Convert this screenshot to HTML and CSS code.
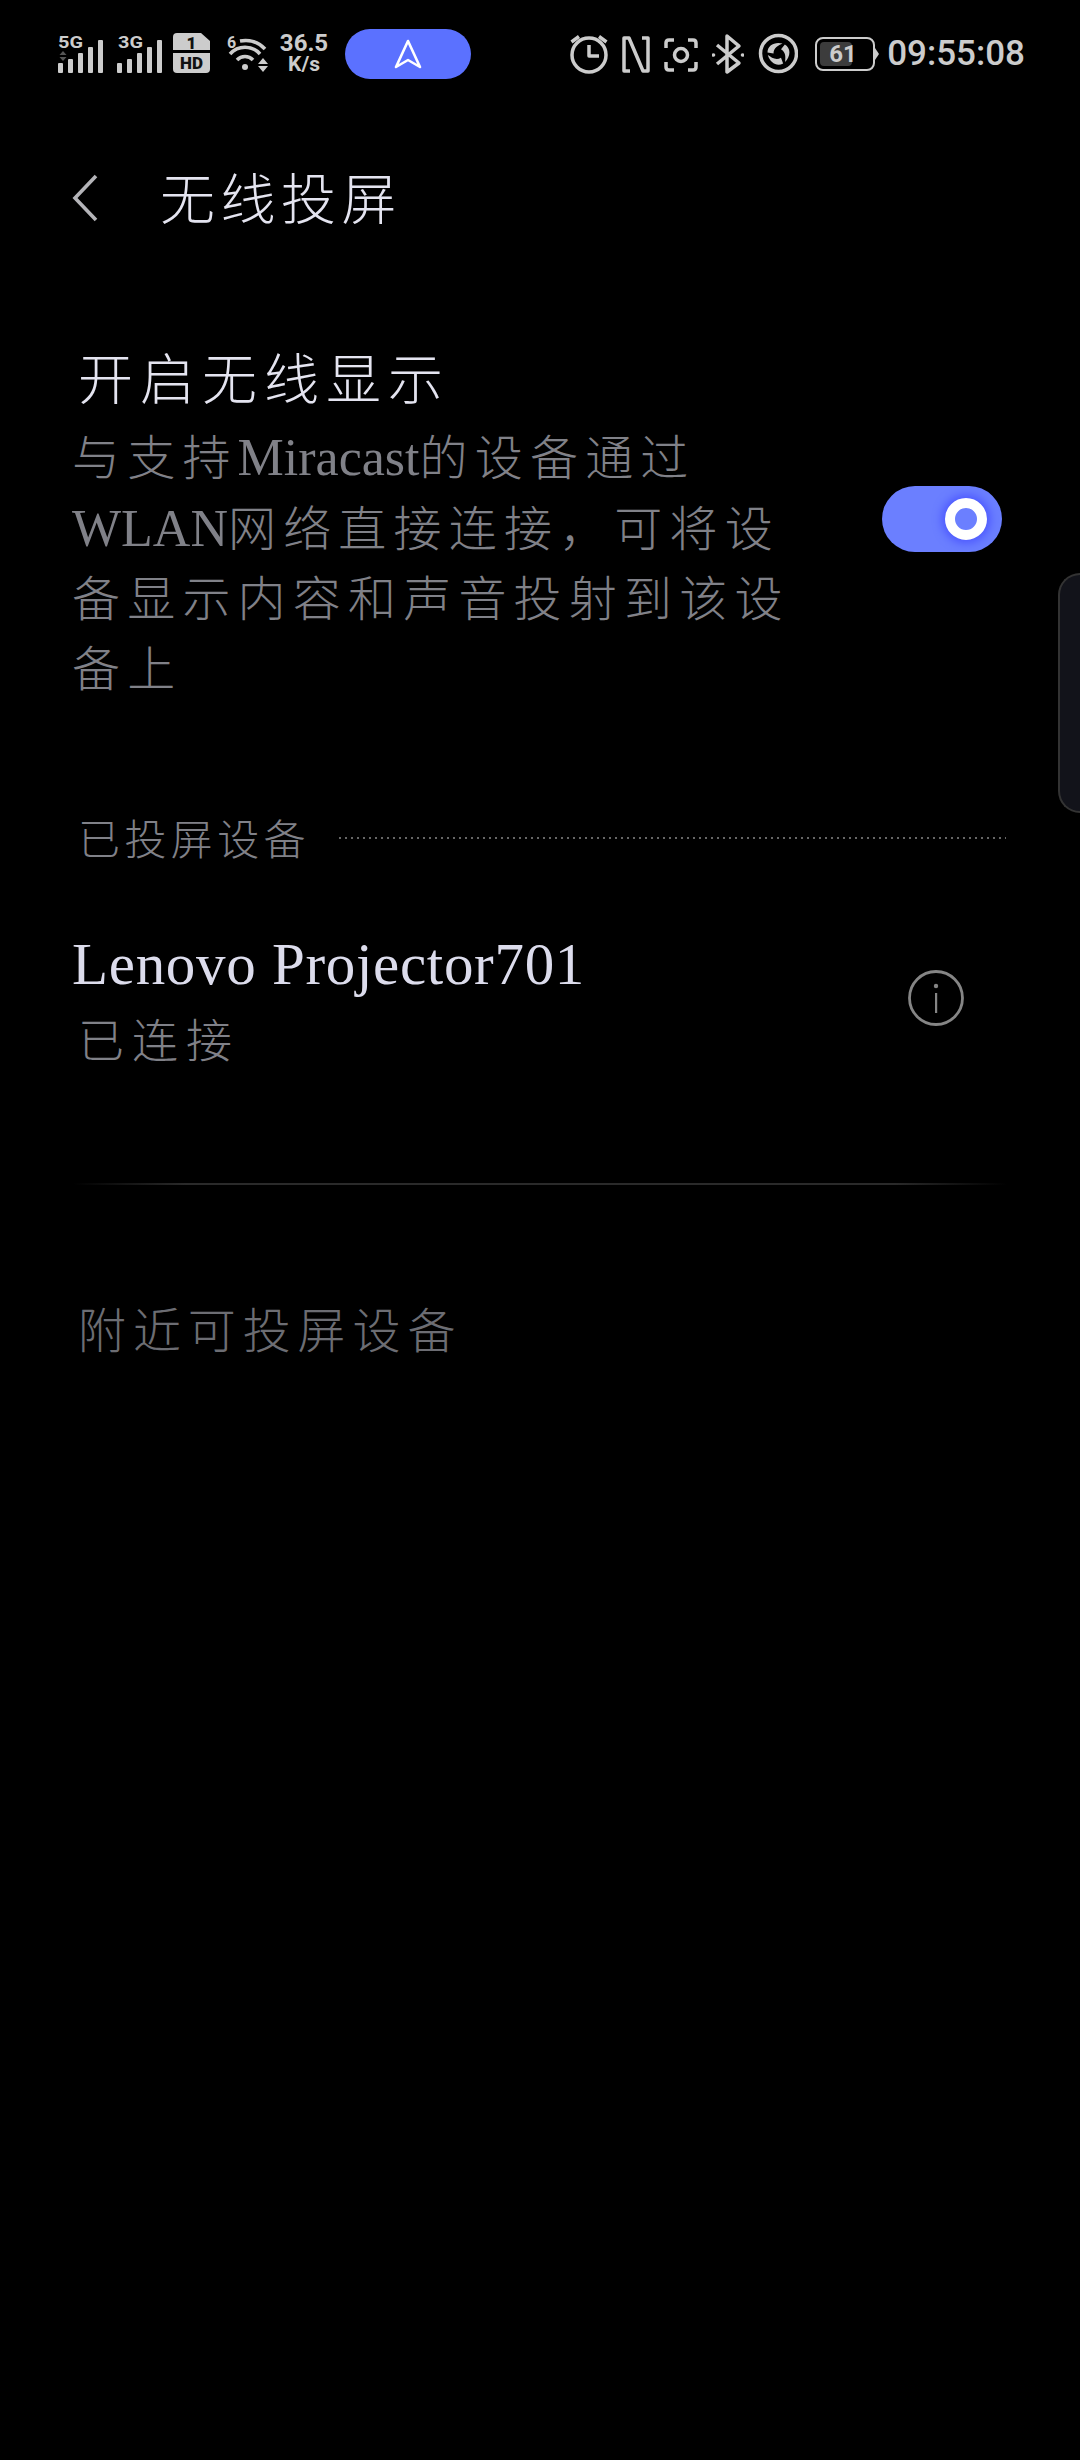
FILE: index.html
```html
<!DOCTYPE html>
<html lang="zh-CN">
<head>
    <meta charset="UTF-8">
    <title>无线投屏</title>
    <link rel="stylesheet" href="styles.css">
</head>
<body>
<div class="status">
    <div class="status-left">
        <svg class="ic" width="46" height="50" viewBox="0 0 46 50">
            <text x="0" y="19" class="ic-label" textLength="25" lengthAdjust="spacingAndGlyphs">5G</text>
            <path class="dim" d="M4 22l3.500 4h-7zM4 32l3.500-4h-7z" transform="translate(1 0)"/>
            <rect class="bar" x="0" y="34" width="5" height="10" rx="1"/>
            <rect class="bar" x="10" y="30" width="5" height="14" rx="1"/>
            <rect class="bar" x="20" y="24" width="5" height="20" rx="1"/>
            <rect class="bar" x="30" y="18" width="5" height="26" rx="1"/>
            <rect class="bar" x="40" y="11" width="5" height="33" rx="1"/>
        </svg>
        <svg class="ic gap-13" width="46" height="50" viewBox="0 0 46 50">
            <text x="1" y="19" class="ic-label" textLength="25" lengthAdjust="spacingAndGlyphs">3G</text>
            <rect class="bar" x="0" y="34" width="5" height="10" rx="1"/>
            <rect class="bar" x="10" y="30" width="5" height="14" rx="1"/>
            <rect class="bar" x="20" y="24" width="5" height="20" rx="1"/>
            <rect class="bar" x="30" y="18" width="5" height="26" rx="1"/>
            <rect class="bar" x="40" y="11" width="5" height="33" rx="1"/>
        </svg>
        <svg class="ic gap-10" width="37" height="50" viewBox="0 0 37 50">
            <path class="bar" d="M4 4H28L37 12V21H0V8Q0 4 4 4Z"/>
            <path class="bar" d="M0 24H37V40Q37 44 33 44H4Q0 44 0 40Z"/>
            <text x="18.500" y="19.500" class="sim-text">1</text>
            <text x="18.500" y="40" class="sim-text">HD</text>
        </svg>
        <svg class="ic gap-17" width="42" height="50" viewBox="0 0 42 50">
            <text x="0" y="19" class="ic-label">6</text>
            <path class="line" d="M13 12A27 27 0 0 1 38 20M3 25A20 20 0 0 1 33 25M10 31A11 11 0 0 1 26 31"/>
            <circle class="bar" cx="18" cy="38" r="3"/>
            <path class="bar" d="M36 29l5 6h-10zM36 43l5-6h-10z"/>
        </svg>
        <div class="speed gap-11"><span>36.5</span><span class="speed-unit">K/s</span></div>
        <div class="nav-pill gap-17">
            <svg width="30" height="32" viewBox="0 0 30 32"><path d="M15 3L27 29L15 22L3 29Z" fill="none" stroke="#fff" stroke-width="2.600" stroke-linejoin="round"/></svg>
        </div>
    </div>
    <div class="status-right">
        <svg class="ic" width="38" height="50" viewBox="0 0 38 50">
            <circle class="line" cx="19" cy="26" r="17"/>
            <path class="line" d="M19 16V27H29M1.500 13L9 7.500M36.500 13L29 7.500"/>
        </svg>
        <svg class="ic" width="28" height="50" viewBox="0 0 28 50">
            <path class="line" d="M8 42H2V9H7L21 42H26V9H20"/>
        </svg>
        <svg class="ic" width="34" height="50" viewBox="0 0 34 50">
            <path class="line" d="M10 11H5Q2 11 2 14V19M24 11H29Q32 11 32 14V19M10 41H5Q2 41 2 38V33M24 41H29Q32 41 32 38V33"/>
            <circle class="line" cx="17" cy="26" r="6.500"/>
        </svg>
        <svg class="ic" width="32" height="50" viewBox="0 0 32 50">
            <path class="line" d="M5 16L27 34L15 43V7L27 17L5 35"/>
            <circle class="bar" cx="1.500" cy="26" r="1.800"/>
            <circle class="bar" cx="30.500" cy="26" r="1.800"/>
        </svg>
        <svg class="ic" width="40" height="50" viewBox="0 0 40 50">
            <circle class="line" cx="20.500" cy="24.500" r="18"/>
            <g class="bar" transform="translate(20.500 24.500)">
                <path id="blade" d="M-11-1C-11-8-4-12 4-10C0-8-5-6-5 0Z"/>
                <use href="#blade" transform="rotate(120)"/>
                <use href="#blade" transform="rotate(240)"/>
            </g>
        </svg>
        <div class="battery">
            <div class="battery-body"><div class="battery-fill">61</div></div>
            <div class="battery-tip"></div>
        </div>
        <div class="clock">09:55:08</div>
    </div>
</div>

<div class="header">
    <svg class="back" width="26" height="48" viewBox="0 0 26 48"><path d="M24 2L3 24L24 46" fill="none" stroke="#b4b4b8" stroke-width="3.600"/></svg>
    <div class="header-title">无线投屏</div>
</div>

<div class="switch-row">
    <div class="switch-text">
        <div class="switch-title">开启无线显示</div>
        <div class="switch-desc">与支持<span class="latin">Miracast</span>的设备通过<br><span class="latin">WLAN</span>网络直接连接，可将设<br>备显示内容和声音投射到该设<br>备上</div>
    </div>
    <div class="toggle"><div class="knob"></div></div>
</div>

<div class="section-head">
    <div class="section-title">已投屏设备</div>
    <div class="dots"></div>
</div>

<div class="device">
    <div class="device-text">
        <div class="device-name">Lenovo Projector701</div>
        <div class="device-state">已连接</div>
    </div>
    <svg class="info" width="56" height="56" viewBox="0 0 56 56">
        <circle cx="28" cy="28" r="26.500" fill="none" stroke="#858585" stroke-width="2.800"/>
        <circle cx="28" cy="16" r="2.200" fill="#858585"/>
        <rect x="27" y="23" width="2.200" height="20" fill="#858585"/>
    </svg>
</div>

<div class="divider"></div>

<div class="nearby">附近可投屏设备</div>

<div class="side-tab"></div>
</body>
</html>
```

FILE: styles.css
```css
body { margin: 0; height: 2460px; overflow: hidden; position: relative; background-color: #000; font-family: "Liberation Serif", "Noto Sans CJK SC", serif; font-weight: 300; }

/* status bar */
.status { height: 108px; padding: 0 55px 0 58px; display: flex; justify-content: space-between; align-items: center; color: #ccc; font-family: Roboto, sans-serif; }
.status-left, .status-right { display: flex; align-items: center; }
.status-right { gap: 14px; }
.ic { display: block; flex: none; }
.ic-label { font: bold 16px Roboto, sans-serif; fill: #ccc; }
.bar { fill: #ccc; }
.dim { fill: #555; }
.line { fill: none; stroke: #ccc; stroke-width: 3.5; stroke-linejoin: round; }
.sim-text { font: 900 17px Roboto, sans-serif; fill: #111; text-anchor: middle; }
.gap-10 { margin-left: 10px; }
.gap-11 { margin-left: 11px; }
.gap-13 { margin-left: 13px; }
.gap-17 { margin-left: 17px; }
.speed { width: 48px; display: flex; flex-direction: column; align-items: center; font-size: 24px; font-weight: 700; line-height: 21px; }
.speed-unit { font-size: 21px; }
.nav-pill { width: 126px; height: 50px; border-radius: 25px; background-color: #5b71ff; display: flex; align-items: center; justify-content: center; }
.battery { width: 64px; height: 34px; margin-left: 3px; display: flex; align-items: center; }
.battery-body { width: 60px; height: 34px; box-sizing: border-box; padding: 3px; border: 2.5px solid #ccc; border-radius: 8px; }
.battery-fill { width: 32px; height: 100%; box-sizing: border-box; padding-left: 9px; border-radius: 4px; background-color: #3c3c3c; font-size: 24px; font-weight: 700; line-height: 24px; white-space: nowrap; }
.battery-tip { width: 0; height: 0; border-left: 4px solid #ccc; border-top: 6px solid transparent; border-bottom: 6px solid transparent; }
.clock { margin-left: -6px; font-size: 35px; font-weight: 500; line-height: 50px; }

/* title */
.header { height: 180px; padding-left: 72px; display: flex; align-items: center; }
.back { display: block; }
.header-title { margin: 0 0 6px 62px; font-size: 55px; letter-spacing: 5.5px; color: #e4e4f0; }

/* main switch */
.switch-row { margin-top: 52px; padding: 0 78px 0 72px; display: flex; align-items: center; justify-content: space-between; }
.switch-title { padding-left: 6px; font-size: 55px; line-height: 82px; letter-spacing: 7px; color: #e4e4f0; }
.switch-desc { margin-top: 1px; white-space: nowrap; font-size: 48px; line-height: 70px; letter-spacing: 7.2px; color: #808188; }
.switch-desc .latin { font-size: 52px; letter-spacing: 0; }
.toggle { width: 120px; height: 66px; margin-bottom: 7px; padding-right: 15px; box-sizing: border-box; border-radius: 33px; background-color: #6b7fff; display: flex; align-items: center; justify-content: flex-end; }
.knob { width: 42px; height: 42px; box-sizing: border-box; border: 10px solid #fff; border-radius: 50%; background-color: #6b7fff; box-shadow: 0 0 10px 3px #4a55ff; }

/* connected list */
.section-head { margin-top: 101px; padding: 0 74px 0 78px; height: 60px; display: flex; align-items: center; }
.section-title { font-size: 42px; letter-spacing: 4.4px; color: #808188; }
.dots { flex: 1; height: 2px; margin: 3px 0 0 29px; background-image: repeating-linear-gradient(90deg, #666 0 2px, transparent 2px 6px); }
.device { padding: 0 72px; margin-top: 60px; display: flex; align-items: center; justify-content: space-between; }
.device-name { font-size: 59px; line-height: 76px; letter-spacing: 0.7px; color: #dcdcec; }
.device-state { padding-left: 6px; font-size: 46px; line-height: 80px; letter-spacing: 8px; color: #808188; }
.info { display: block; margin: 0 44px 12px 0; }

.divider { height: 2px; margin: 101px 73px 0; background-image: linear-gradient(90deg, #000, #2a2a2a 12%, #2a2a2a 88%, #000); }

.nearby { margin-top: 112px; padding-left: 78px; font-size: 48px; line-height: 70px; letter-spacing: 6.9px; color: #6c6d73; }

/* floating edge handle */
.side-tab { position: absolute; top: 573px; right: 0; width: 20px; height: 236px; border: 2px solid #333; border-right: 0; border-radius: 22px 0 0 22px; background-color: #12131a; }
```
